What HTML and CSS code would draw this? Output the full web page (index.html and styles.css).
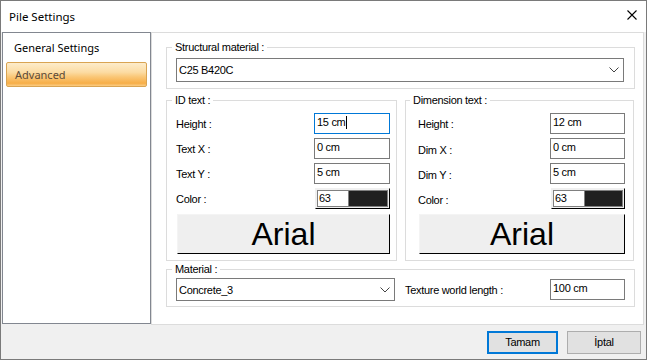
FILE: index.html
```html
<!DOCTYPE html>
<html lang="en">
<head>
    <meta charset="UTF-8">
    <meta name="viewport" content="width=device-width, initial-scale=1.0">
    <title>Pile Settings</title>
    <link rel="stylesheet" href="styles.css">
</head>
<body>
    <div class="window">
        <div class="titlebar">
            <span class="title">Pile Settings</span>
            <div class="close">
                <svg width="10" height="10" viewBox="0 0 10 10">
                    <path d="M0.5 0.5 L9.5 9.5 M9.5 0.5 L0.5 9.5" stroke="#000" stroke-width="1.1" fill="none"/>
                </svg>
            </div>
        </div>

        <div class="main">
            <div class="sidebar">
                <div class="nav-item">General Settings</div>
                <div class="nav-item active">Advanced</div>
            </div>

            <div class="panel">
                <fieldset class="group group-struct">
                    <legend>Structural material :</legend>
                    <div class="combo combo-struct">
                        <span>C25 B420C</span>
                        <svg width="10" height="6" viewBox="0 0 10 6"><path d="M0.5 0.5 L5 5 L9.5 0.5" stroke="#444" fill="none"/></svg>
                    </div>
                </fieldset>

                <div class="text-groups">
                    <fieldset class="group group-id">
                        <legend>ID text :</legend>
                        <div class="fields">
                            <div class="field">
                                <span>Height :</span>
                                <div class="textbox focused">15 cm<span class="caret"></span></div>
                            </div>
                            <div class="field">
                                <span>Text X :</span>
                                <div class="textbox">0 cm</div>
                            </div>
                            <div class="field">
                                <span>Text Y :</span>
                                <div class="textbox">5 cm</div>
                            </div>
                            <div class="field">
                                <span>Color :</span>
                                <div class="swatch">
                                    <span class="swatch-num">63</span>
                                    <span class="swatch-color"></span>
                                </div>
                            </div>
                            <div class="font-btn">Arial</div>
                        </div>
                    </fieldset>

                    <fieldset class="group group-dim">
                        <legend>Dimension text :</legend>
                        <div class="fields">
                            <div class="field">
                                <span>Height :</span>
                                <div class="textbox">12 cm</div>
                            </div>
                            <div class="field">
                                <span class="low">Dim X :</span>
                                <div class="textbox">0 cm</div>
                            </div>
                            <div class="field">
                                <span class="low">Dim Y :</span>
                                <div class="textbox">5 cm</div>
                            </div>
                            <div class="field">
                                <span class="low">Color :</span>
                                <div class="swatch">
                                    <span class="swatch-num">63</span>
                                    <span class="swatch-color"></span>
                                </div>
                            </div>
                            <div class="font-btn">Arial</div>
                        </div>
                    </fieldset>
                </div>

                <fieldset class="group group-mat">
                    <legend>Material :</legend>
                    <div class="mat-row">
                        <div class="combo combo-mat">
                            <span>Concrete_3</span>
                            <svg width="10" height="6" viewBox="0 0 10 6"><path d="M0.5 0.5 L5 5 L9.5 0.5" stroke="#444" fill="none"/></svg>
                        </div>
                        <span class="tex-label">Texture world length :</span>
                        <div class="textbox tex-box">100 cm</div>
                    </div>
                </fieldset>
            </div>
        </div>

        <div class="footer">
            <div class="btn primary">Tamam</div>
            <div class="btn">İptal</div>
        </div>
    </div>
</body>
</html>
```

FILE: styles.css
```css
body {
    margin: 0;
    font-family: "Liberation Sans", Arial, sans-serif;
    font-size: 11px;
    letter-spacing: -0.3px;
    color: #000;
}

.window {
    width: 647px;
    height: 360px;
    box-sizing: border-box;
    border: 1px solid #7a7a7a;
    background: #f0f0f0;
    display: flex;
    flex-direction: column;
}

.titlebar {
    height: 31px;
    flex: none;
    background: #fff;
    display: flex;
    align-items: center;
    justify-content: space-between;
    padding-left: 8px;
}

.title {
    font-family: "Noto Sans", sans-serif;
    font-size: 11.5px;
    letter-spacing: 0;
    margin-top: -1px;
}

.close {
    width: 28px;
    height: 31px;
    display: flex;
    align-items: center;
    justify-content: center;
    margin-top: -3px;
}

.main {
    height: 293px;
    flex: none;
    display: flex;
}

.sidebar {
    width: 149px;
    height: 292px;
    box-sizing: border-box;
    margin-left: 1px;
    border: 1px solid #828790;
    background: #fff;
    padding-top: 3px;
}

.nav-item {
    height: 24px;
    line-height: 24px;
    padding-left: 11px;
    font-family: "Noto Sans", sans-serif;
    font-size: 11px;
    letter-spacing: 0;
}

.nav-item.active {
    height: 25px;
    box-sizing: border-box;
    line-height: 23px;
    margin: 2px 3px 0;
    padding-left: 8px;
    border: 1px solid #d9a452;
    border-radius: 2px;
    color: #5c4a38;
    background: linear-gradient(#fdeccb 0%, #fcdca3 40%, #fac777 60%, #f7ae47 88%, #fbcd85 100%);
}

.panel {
    width: 493px;
    height: 293px;
    box-sizing: border-box;
    border: 1px solid #dcdcdc;
    background: #fff;
    padding: 8px 8px 0 14px;
}

.group {
    margin: 0;
    border: 1px solid #dcdcdc;
    min-width: 0;
    box-sizing: border-box;
}

.group legend {
    padding: 0 3px;
    margin-left: -4px;
    line-height: 13px;
}

.group-struct {
    padding: 4px 10px 6px 9px;
}

.combo {
    box-sizing: border-box;
    border: 1px solid #7a7a7a;
    background: #fff;
    display: flex;
    align-items: center;
    justify-content: space-between;
    padding: 0 4px 0 2px;
}

.combo-struct {
    height: 24px;
}

.text-groups {
    display: flex;
    gap: 8px;
    margin-top: 5px;
}

.group-id {
    width: 231px;
    padding: 6px 6px 6px 9px;
}

.group-dim {
    width: 229px;
    padding: 6px 8px 6px 12px;
}

.group-dim legend {
    margin-left: -8px;
}

.fields {
    display: flex;
    flex-direction: column;
    gap: 4px;
}

.field {
    height: 21px;
    display: flex;
    align-items: center;
    justify-content: space-between;
}

.field .low {
    margin-top: 3px;
}

.textbox {
    width: 76px;
    height: 21px;
    box-sizing: border-box;
    border: 1px solid #7a7a7a;
    background: #fff;
    padding-left: 2px;
    line-height: 17px;
}

.group-dim .textbox {
    width: 75px;
}

.textbox.focused {
    border-color: #0078d7;
}

.caret {
    display: inline-block;
    width: 1px;
    height: 13px;
    background: #000;
    vertical-align: -3px;
    margin-left: 1px;
}

.swatch {
    width: 75px;
    height: 21px;
    box-sizing: border-box;
    border: 1px solid;
    border-color: #f0f0f0 #000 #000 #f0f0f0;
    background: #f0f0f0;
    padding: 1px;
    display: flex;
}

.group-dim .swatch {
    width: 74px;
}

.swatch-num {
    width: 32px;
    box-sizing: border-box;
    border: 1px solid #808080;
    background: #fff;
    line-height: 15px;
    padding-left: 1px;
}

.swatch-color {
    flex: 1;
    border: 1px solid #808080;
    border-left: none;
    background: #202020;
}

.font-btn {
    height: 40px;
    box-sizing: border-box;
    margin: 1px 0 0 1px;
    border: 1px solid;
    border-color: #f4f4f4 #000 #000 #f4f4f4;
    background: #efefef;
    font-family: "Liberation Sans", Arial, sans-serif;
    font-size: 32px;
    letter-spacing: 0;
    text-align: center;
    line-height: 38px;
}

.group-mat {
    margin-top: 2px;
    padding: 2px 9px 5px 9px;
}

.mat-row {
    display: flex;
    align-items: center;
}

.combo-mat {
    width: 219px;
    height: 23px;
}

.tex-label {
    margin-left: 10px;
}

.tex-box {
    margin-left: auto;
    width: 75px;
}

.footer {
    flex: 1;
    display: flex;
    justify-content: flex-end;
    align-items: flex-start;
    gap: 9px;
    padding: 6px 5px 0 0;
}

.btn {
    width: 74px;
    height: 23px;
    box-sizing: border-box;
    border: 1px solid #adadad;
    background: #e1e1e1;
    text-align: center;
    line-height: 21px;
}

.btn.primary {
    width: 71px;
    border: 2px solid #0078d7;
    line-height: 19px;
}
```
